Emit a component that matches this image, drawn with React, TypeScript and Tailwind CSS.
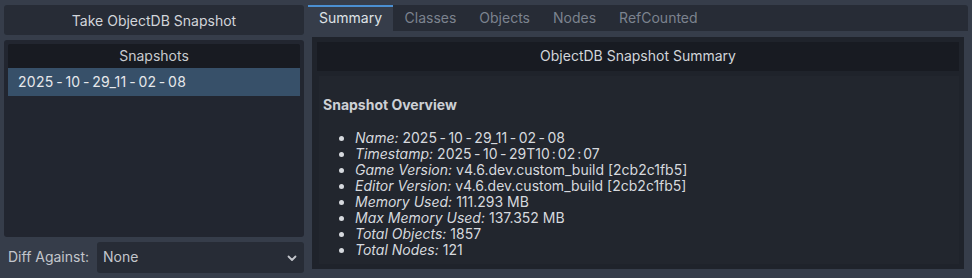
import React from "react";

const items: [string, string][] = [
  ["Name:", "2025-10-29_11-02-08"],
  ["Timestamp:", "2025-10-29T10:02:07"],
  ["Game Version:", "v4.6.dev.custom_build [2cb2c1fb5]"],
  ["Editor Version:", "v4.6.dev.custom_build [2cb2c1fb5]"],
  ["Memory Used:", "111.293 MB"],
  ["Max Memory Used:", "137.352 MB"],
  ["Total Objects:", "1857"],
  ["Total Nodes:", "121"],
];

function Spaced({ text }: { text: string }) {
  const parts = text.split(/([-:])/);
  return (
    <>
      {parts.map((p, i) =>
        p === "-" ? (
          <span key={i} className="mx-[2.5px]">
            {p}
          </span>
        ) : p === ":" ? (
          <span key={i} className="mx-[2px]">
            {p}
          </span>
        ) : (
          <React.Fragment key={i}>{p}</React.Fragment>
        )
      )}
    </>
  );
}

export default function App() {
  return (
    <div
      className="w-[972px] h-[278px] bg-[#363d4a] flex gap-[4px] pt-[5px] pb-[5px] px-[4px] text-[14px] text-[#d6d9de] overflow-hidden"
      style={{ fontFamily: "Inter, 'Noto Sans', sans-serif" }}
    >
      {/* Left column */}
      <div className="w-[300px] flex flex-col shrink-0">
        <div className="h-[30px] rounded-[3px] bg-[#272c36] flex items-center justify-center text-[#d2d5da]">
          Take ObjectDB Snapshot
        </div>
        <div className="mt-[5px] h-[197px] rounded-[3px] bg-[#222630] p-[4px] flex flex-col">
          <div className="h-[24px] bg-[#181b22] rounded-t-[2px] flex items-center justify-center text-[#c8cbd0] pb-[2px]">
            Snapshots
          </div>
          <div className="h-[28px] bg-[#375069] flex items-center pl-[10px] text-[#e6e8eb] tracking-[0.3px] pb-[2px]">
            <Spaced text="2025-10-29_11-02-08" />
          </div>
        </div>
        <div className="mt-[5px] flex items-center h-[31px]">
          <div className="w-[93px] pl-[4px] text-[#c3c6cc] -mt-[2px]">Diff Against:</div>
          <div className="flex-1 h-[31px] rounded-[3px] bg-[#272c36] flex items-center justify-between pl-[6px] pr-[6px] text-[#c3c6cc]">
            <span className="-mt-[2px]">None</span>
            <svg width="12" height="12" viewBox="0 0 12 12" fill="none">
              <path d="M2.5 4.5 L6 8 L9.5 4.5" stroke="#c3c6cc" strokeWidth="1.8" strokeLinecap="round" strokeLinejoin="round" />
            </svg>
          </div>
        </div>
      </div>

      {/* Right column */}
      <div className="flex-1 flex flex-col">
        <div className="h-[26px] bg-[#272c36] rounded-t-[3px] flex items-stretch">
          <div className="px-[11px] bg-[#363d4a] border-t-2 border-[#4b8fd1] flex items-center text-[#dfe2e6] pb-[3px]">
            Summary
          </div>
          {["Classes", "Objects", "Nodes", "RefCounted"].map((t) => (
            <div key={t} className="px-[11.5px] flex items-center text-[#7c838f] pb-[1px]">
              {t}
            </div>
          ))}
        </div>
        <div className="flex-1 pt-[6px] px-[4px] pb-[4px]">
          <div className="h-full bg-[#1f232b] p-[5px] flex flex-col">
            <div className="h-[29px] bg-[#181b22] flex items-center justify-center text-[#d2d5da] shrink-0 pb-[2px]">
              ObjectDB Snapshot Summary
            </div>
            <div className="mt-[5px] ml-[2px] flex-1 bg-[#22262e] pl-[4px] pt-[19px]">
              <div className="font-bold text-[#cdd0d5] leading-[20px]">Snapshot Overview</div>
              <ul className="mt-[15px]">
                {items.map(([k, v]) => (
                  <li key={k} className="flex items-center leading-[16px] h-[16px]">
                    <span className="w-[32px] flex justify-center pl-[4px]">
                      <span className="w-[5px] h-[5px] rounded-full bg-[#d6d9de]" />
                    </span>
                    <span className="italic text-[#d6d9de]">{k}</span>
                    <span className="ml-[4px] text-[#d6d9de]">
                      <Spaced text={v} />
                    </span>
                  </li>
                ))}
              </ul>
            </div>
          </div>
        </div>
      </div>
    </div>
  );
}
